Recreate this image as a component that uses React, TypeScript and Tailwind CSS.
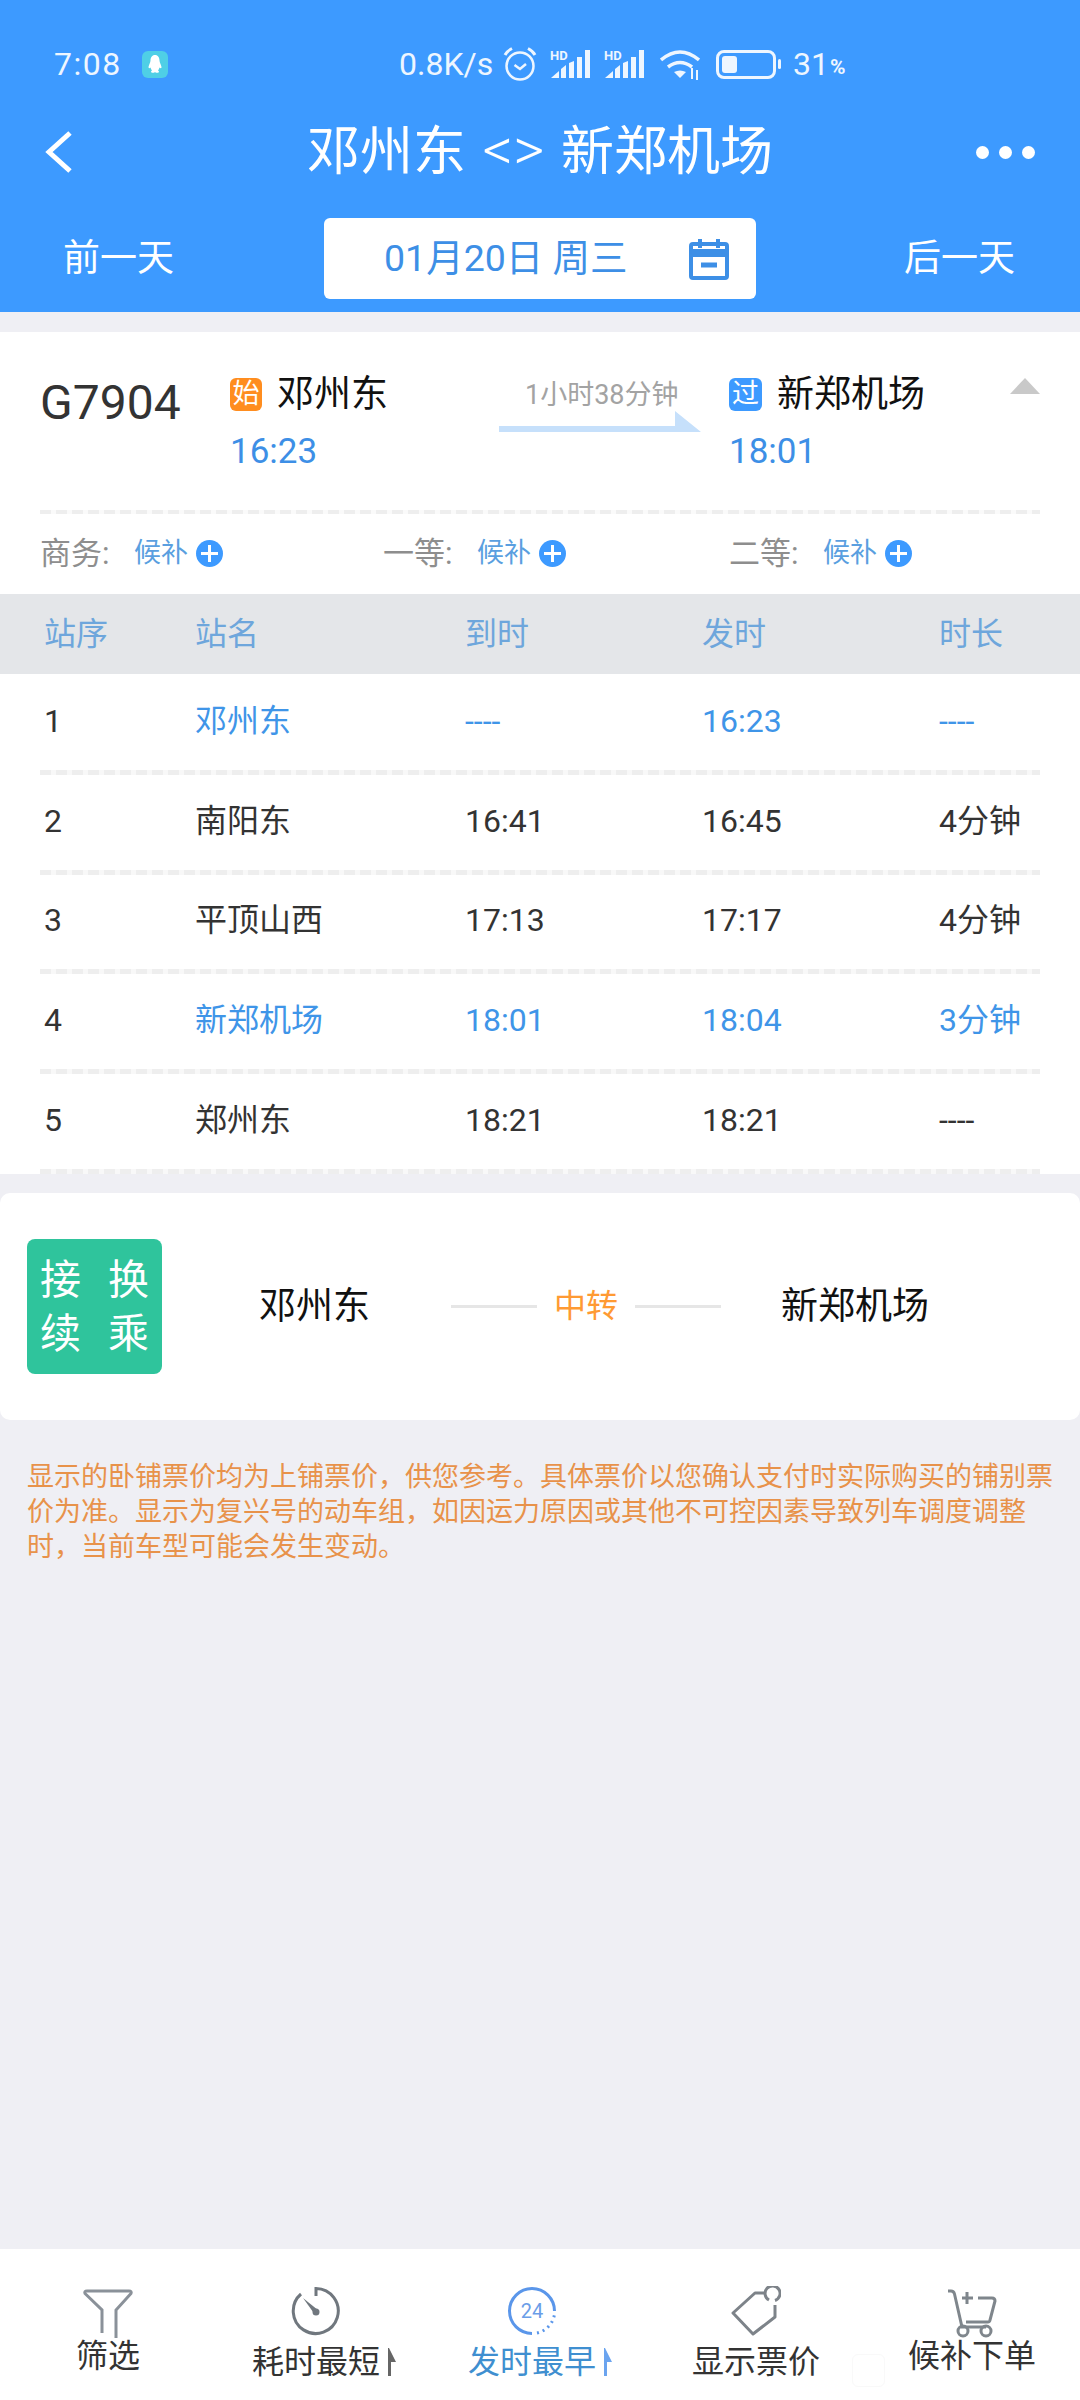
const cjk = "font-['Roboto','Noto_Sans_CJK_SC',sans-serif]";

const rows = [
  { no: "1", name: "邓州东", arrive: "----", depart: "16:23", stay: "----", hot: true },
  { no: "2", name: "南阳东", arrive: "16:41", depart: "16:45", stay: "4分钟", hot: false },
  { no: "3", name: "平顶山西", arrive: "17:13", depart: "17:17", stay: "4分钟", hot: false },
  { no: "4", name: "新郑机场", arrive: "18:01", depart: "18:04", stay: "3分钟", hot: true },
  { no: "5", name: "郑州东", arrive: "18:21", depart: "18:21", stay: "----", hot: false },
];

function Signal() {
  return (
    <svg width="40" height="33" viewBox="0 -4 40 33" fill="#eef6ff">
      <text x="0" y="10" fontSize="13" fontWeight="700" fontFamily="Roboto">HD</text>
      <path d="M1 28l8-7v7z" />
      <path d="M11 19l5-4v13h-5z" />
      <path d="M19 13l5-2v17h-5z" />
      <rect x="27" y="7" width="5" height="21" />
      <rect x="35" y="0" width="5" height="28" />
    </svg>
  );
}

function StatusBar() {
  return (
    <div className="h-[82px] pt-[46px] pl-[54px] flex items-center text-[#eef6ff]">
      <span className="text-[32px] leading-none w-[88px] tracking-[1.5px]">7:08</span>
      <span className="w-[26px] h-[27px] rounded-[6px] bg-[#4fcfe6] flex items-center justify-center">
        <svg width="14" height="18" viewBox="0 0 14 18" fill="#fff">
          <path d="M7 0c3 0 4.500 2.500 4.500 5.500 0 2 1.500 4 2 6.500 0 1.500-1 1.500-2 .5-.5 2-1.500 3-1.500 3s1 .5 1 1.500c0 1-4 1-4 0 0 1-4 1-4 0s1-1.500 1-1.500-1-1-1.500-3c-1 1-2 1-2-.5.5-2.500 2-4.500 2-6.500C2.500 2.500 4 0 7 0z" />
        </svg>
      </span>
      <span className="ml-[231px] text-[32px] leading-none w-[104px]">0.8K/s</span>
      <svg width="36" height="36" viewBox="0 0 36 36" fill="none" stroke="#eef6ff" strokeWidth="2.500">
        <circle cx="17" cy="20" r="13.500" />
        <path d="M11.500 19l5.500 4 6-5" />
        <path d="M2 9c1.500-3 4-5 7-6.500M32 9c-1.500-3-4-5-7-6.500" strokeWidth="3" />
      </svg>
      <div className="ml-[11px] mt-[-4px] flex gap-[14px]">
        <Signal />
        <Signal />
      </div>
      <svg className="ml-[16px]" width="40" height="32" viewBox="0 0 40 32" fill="none" stroke="#eef6ff" strokeWidth="3.500">
        <path d="M1 12Q20-4 39 12M8 19q12-9 24 0" />
        <path d="M14 24q6-3 12 0l-6 6z" fill="#eef6ff" stroke="none" />
        <path d="M32 20v11M37 22v10" strokeWidth="2" />
      </svg>
      <div className="ml-[16px] w-[60px] h-[29px] rounded-[8px] border-[3px] border-[#eef6ff] p-[3px]">
        <div className="w-[15px] h-full rounded-[3px] bg-[#eef6ff]" />
      </div>
      <span className="ml-[2px] w-[3px] h-[10px] rounded-full bg-[#eef6ff]" />
      <span className="ml-[12px] text-[32px] leading-none">31</span>
      <span className="ml-[1px] text-[21px] leading-none mt-[7px] font-bold">%</span>
    </div>
  );
}

function Header() {
  return (
    <header className="h-[312px] bg-[#3d9aff] text-white">
      <StatusBar />
      <div className="h-[66px] mt-[37px] px-[45px] grid grid-cols-[1fr_auto_1fr] items-center">
        <svg width="27" height="42" viewBox="0 0 27 42" fill="none" stroke="#fff" strokeWidth="5">
          <path d="M25 2 4 21l21 19" />
        </svg>
        <h1 className="text-[53px] leading-[66px] whitespace-nowrap">
          邓州东<span className="text-[60px] leading-none font-light mx-[2px]"> &lt;&gt; </span>新郑机场
        </h1>
        <div className="flex gap-[10px] justify-self-end">
          <span className="w-[13px] h-[13px] rounded-full bg-white" />
          <span className="w-[13px] h-[13px] rounded-full bg-white" />
          <span className="w-[13px] h-[13px] rounded-full bg-white" />
        </div>
      </div>
      <div className="mt-[33px] flex items-center pl-[63px]">
        <span className="text-[37px] leading-none w-[261px]">前一天</span>
        <div className="w-[432px] h-[81px] rounded-[6px] bg-white text-[#3d8fe6] flex items-center pl-[60px]">
          <span className="text-[37.500px] leading-none w-[305px] whitespace-nowrap">01月20日 周三</span>
          <svg width="40" height="42" viewBox="0 0 40 42" fill="none" stroke="#3d8fe6">
            <rect x="2" y="6" width="36" height="34" rx="2" strokeWidth="4" />
            <path d="M2 15h36" strokeWidth="8" />
            <path d="M11 1v9M29 1v9" strokeWidth="4" />
            <path d="M12 27h16" strokeWidth="5" />
          </svg>
        </div>
        <span className="ml-[148px] text-[37px] leading-none">后一天</span>
      </div>
    </header>
  );
}

function Seat({ label, width }: { label: string; width: string }) {
  return (
    <div className={`flex items-center ${width}`}>
      <span className="text-[31px] leading-none text-[#8e8e8e] w-[94px]">{label}</span>
      <span className="text-[27px] leading-none text-[#5a9fe0]">候补</span>
      <span className="ml-[8px] w-[27px] h-[27px] rounded-full bg-[#3d9aff] flex items-center justify-center">
        <svg width="17" height="17" viewBox="0 0 17 17" stroke="#fff" strokeWidth="3">
          <path d="M8.500 0v17M0 8.500h17" />
        </svg>
      </span>
    </div>
  );
}

function TrainSummary() {
  return (
    <div className="h-[262px] px-[40px]">
      <div className="h-[178px] flex relative">
        <span className="mt-[41px] text-[48px] leading-[60px] text-[#333] w-[190px]">G7904</span>
        <div className="pt-[46px] w-[269px]">
          <div className="flex items-center">
            <span className="w-[32px] h-[33px] rounded-[6px] bg-[#ff8d1f] text-white text-[27px] leading-[33px] text-center">始</span>
            <span className="ml-[15px] text-[37px] leading-[33px] text-[#111]">邓州东</span>
          </div>
          <div className="mt-[23px] text-[35px] leading-[36px] text-[#3d8fe6]">16:23</div>
        </div>
        <div className="pt-[46px] w-[230px] flex flex-col items-start">
          <span className="text-[27px] leading-[34px] text-[#a3a3a3] ml-[26px] whitespace-nowrap">1小时38分钟</span>
          <svg className="mt-[-1px]" width="202" height="22" viewBox="0 0 202 22" fill="#c6e0fb">
            <path d="M0 15h176V0l26 21H0z" />
          </svg>
        </div>
        <div className="pt-[46px]">
          <div className="flex items-center">
            <span className="w-[33px] h-[33px] rounded-[6px] bg-[#3d9aff] text-white text-[27px] leading-[33px] text-center">过</span>
            <span className="ml-[15px] text-[37px] leading-[33px] text-[#111]">新郑机场</span>
          </div>
          <div className="mt-[23px] text-[35px] leading-[36px] text-[#3d8fe6]">18:01</div>
        </div>
        <svg className="absolute right-0 top-[46px]" width="30" height="16" viewBox="0 0 30 16" fill="#c9c9c9">
          <path d="M15 0l15 16H0z" />
        </svg>
      </div>
      <div className="h-[4px] bg-[repeating-linear-gradient(90deg,#eeeeee_0_11px,#fafafa_11px_16px)]" />
      <div className="h-[78px] flex items-center">
        <Seat label="商务:" width="w-[343px]" />
        <Seat label="一等:" width="w-[346px]" />
        <Seat label="二等:" width="w-auto" />
      </div>
    </div>
  );
}

function StopTable() {
  return (
    <div>
      <div className="h-[80px] bg-[#e4e6e9] pl-[44px] grid grid-cols-[151px_270px_237px_237px_1fr] items-center text-[32px] leading-none text-[#6ea6dc]">
        <span>站序</span>
        <span>站名</span>
        <span>到时</span>
        <span>发时</span>
        <span>时长</span>
      </div>
      <div className="pt-[1px]">
        {rows.map((row) => (
          <div key={row.no} className="h-[99.750px]">
            <div className={`h-[94.750px] pb-[3px] pl-[44px] grid grid-cols-[151px_270px_237px_237px_1fr] items-center text-[32px] leading-none ${row.hot ? "text-[#3f95e8]" : "text-[#333]"}`}>
              <span className="text-[#333]">{row.no}</span>
              <span>{row.name}</span>
              <span>{row.arrive}</span>
              <span>{row.depart}</span>
              <span>{row.stay}</span>
            </div>
            <div className="mx-[40px] h-[5px] bg-[repeating-linear-gradient(90deg,#eeeeee_0_11px,#f8f8f8_11px_16px)]" />
          </div>
        ))}
      </div>
    </div>
  );
}

function TransferCard() {
  return (
    <div className="mt-[19px] h-[227px] rounded-[10px] bg-white pl-[27px] flex items-center">
      <div className="w-[135px] h-[135px] rounded-[8px] bg-[#2fc49c] text-white text-[41px] leading-[54px] px-[13px] py-[14px] flex flex-col">
        <div className="flex justify-between">
          <span>接</span>
          <span>换</span>
        </div>
        <div className="flex justify-between">
          <span>续</span>
          <span>乘</span>
        </div>
      </div>
      <span className="ml-[97px] w-[192px] text-[37px] leading-none text-[#111]">邓州东</span>
      <span className="w-[86px] h-[3px] bg-[#e6e6e6]" />
      <span className="mx-[17px] w-[64px] text-[32px] leading-none text-[#ff9a33]">中转</span>
      <span className="w-[86px] h-[3px] bg-[#e6e6e6]" />
      <span className="ml-[60px] text-[37px] leading-none text-[#111]">新郑机场</span>
    </div>
  );
}

function TabIcon({ name }: { name: string }) {
  if (name === "filter") {
    return (
      <svg className="overflow-visible" width="50" height="50" viewBox="0 0 50 50" fill="none" stroke="#8a9199" strokeWidth="3">
        <path d="M19 47V24L2 7.500Q1 5 4 5H46Q49 5 48 7.500L33 24V52" />
      </svg>
    );
  }
  if (name === "timer") {
    return (
      <svg width="50" height="50" viewBox="0 0 50 50" fill="none" stroke="#70777e" strokeWidth="3">
        <path d="M25 10V2.500a22.500 22.500 0 1 1-15 5.500" />
        <path d="M12 12l11.500 16 4-3.500z" fill="#70777e" stroke="none" />
        <circle cx="25" cy="26" r="3.500" fill="#70777e" stroke="none" />
      </svg>
    );
  }
  if (name === "clock") {
    return (
      <svg width="50" height="50" viewBox="0 0 50 50" fill="none" stroke="#5a96ea" strokeWidth="3">
        <path d="M47.500 25A22.500 22.500 0 1 0 25 47.500" />
        <path d="M30 47a22.500 22.500 0 0 0 17.500-19" strokeDasharray="2 4" />
        <text x="25" y="32" textAnchor="middle" fontSize="20" fontFamily="Roboto" fill="#6a9de8" stroke="none">24</text>
      </svg>
    );
  }
  if (name === "tag") {
    return (
      <svg width="50" height="50" viewBox="0 0 50 50" fill="none" stroke="#7d8389" strokeWidth="3" strokeLinejoin="round">
        <path d="M33 7H24L2 27l20 21 22-17V19" />
        <path d="M38 14a7.500 7.500 0 1 1 6 .500" />
      </svg>
    );
  }
  return (
    <svg className="overflow-visible" width="50" height="50" viewBox="0 0 50 50" fill="none" stroke="#7f868c" strokeWidth="3">
      <path d="M1 5h3c2 0 3 1 3.500 3L15 41h24" />
      <path d="M19 36H41c1 0 2-1 2-2L48 15c0-2-1-3-3-3H31" />
      <path d="M20 6v12M15 12h11" />
      <circle cx="16" cy="45" r="5" />
      <circle cx="39" cy="45" r="5" />
    </svg>
  );
}

function Tab({ icon, label, sorted, blue, up }: { icon: string; label: string; sorted?: boolean; blue?: boolean; up?: boolean }) {
  return (
    <div className={`flex flex-col items-center ${blue ? "text-[#3f8fd0]" : "text-[#333]"}`}>
      <div className={sorted ? "mr-[16px]" : ""}>
        <TabIcon name={icon} />
      </div>
      <div className={`flex items-center ${up ? "mt-[0px]" : "mt-[6px]"}`}>
        <span className="text-[32px] leading-[40px]">{label}</span>
        {sorted && (
          <svg className="ml-[8px]" width="8" height="28" viewBox="0 0 8 28" fill={blue ? "#6ba4ef" : "#666"}>
            <path d="M0 0h1l7 14H3v14H0z" />
          </svg>
        )}
      </div>
    </div>
  );
}

export default function App() {
  return (
    <div className={`w-[1080px] h-[2400px] flex flex-col bg-[#efeff4] ${cjk}`}>
      <Header />
      <main className="flex-1 pt-[20px]">
        <section className="bg-white">
          <TrainSummary />
          <StopTable />
        </section>
        <TransferCard />
        <p className="mt-[40px] px-[27px] text-[27px] leading-[35px] text-[#e8924a]">
          显示的卧铺票价均为上铺票价，供您参考。具体票价以您确认支付时实际购买的铺别票价为准。显示为复兴号的动车组，如因运力原因或其他不可控因素导致列车调度调整时，当前车型可能会发生变动。
        </p>
      </main>
      <nav className="h-[151px] bg-white grid grid-cols-5 pt-[37px] relative">
        <Tab icon="filter" label="筛选" up />
        <Tab icon="timer" label="耗时最短" sorted />
        <Tab icon="clock" label="发时最早" sorted blue />
        <Tab icon="tag" label="显示票价" />
        <Tab icon="cart" label="候补下单" up />
        <span className="absolute left-[852px] top-[105px] w-[33px] h-[33px] rounded-[6px] border border-[#f9f9f9]" />
      </nav>
    </div>
  );
}
